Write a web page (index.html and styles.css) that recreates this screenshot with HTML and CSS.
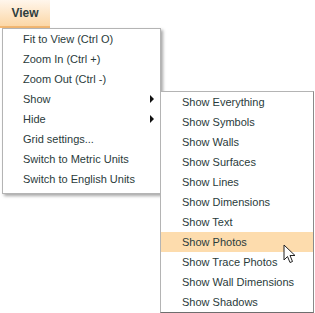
FILE: index.html
```html
<!DOCTYPE html>
<html lang="en">
<head>
  <meta charset="UTF-8">
  <title>View menu</title>
  <link rel="stylesheet" href="styles.css">
</head>
<body>
  <div class="menubar">
    <div class="menu-title">View</div>
  </div>

  <div class="dropdown">
    <ul class="menu">
      <li>Fit to View (Ctrl O)</li>
      <li>Zoom In (Ctrl +)</li>
      <li>Zoom Out (Ctrl -)</li>
      <li class="has-sub">Show <span class="arrow"></span></li>
      <li class="has-sub">Hide <span class="arrow"></span></li>
      <li>Grid settings...</li>
      <li>Switch to Metric Units</li>
      <li>Switch to English Units</li>
    </ul>

    <ul class="submenu">
      <li>Show Everything</li>
      <li>Show Symbols</li>
      <li>Show Walls</li>
      <li>Show Surfaces</li>
      <li>Show Lines</li>
      <li>Show Dimensions</li>
      <li>Show Text</li>
      <li class="active">Show Photos</li>
      <li>Show Trace Photos</li>
      <li>Show Wall Dimensions</li>
      <li>Show Shadows</li>
    </ul>

    <!-- mouse pointer -->
    <svg class="cursor" width="14" height="21" viewBox="0 0 14 21">
      <path d="M1 1 L1 16 L4.5 12.5 L7 18.5 L9.5 17.5 L7 11.5 L12 11.5 Z" fill="#fff" stroke="#222" stroke-width="1" stroke-linejoin="round"/>
    </svg>
  </div>
</body>
</html>
```

FILE: styles.css
```css
body {
  margin: 0;
  background: #fff;
  font-family: "Liberation Sans", Arial, sans-serif;
  font-size: 11px;
  color: #2a3b3b;
  width: 315px;
  height: 313px;
  overflow: hidden;
}

.menubar {
  display: flex;
  height: 28px;
}

.menu-title {
  width: 50px;
  height: 26px;
  line-height: 27px;
  text-align: center;
  font-size: 12px;
  font-weight: bold;
  color: #2e3d3d;
  background: linear-gradient(#fff6ec, #fcd7a6);
  border-bottom: 2px solid #f2b772;
}

.dropdown {
  position: relative;
}

ul {
  list-style: none;
  margin: 0;
  padding: 0;
}

li {
  height: 20px;
  line-height: 20px;
  white-space: nowrap;
}

.menu {
  width: 157px;
  margin: 0 0 0 2px;
  padding-bottom: 4px;
  background: #fff;
  border: 1px solid #b4b4b4;
  box-shadow: 2px 2px 3px rgba(0, 0, 0, 0.35);
}

.menu li {
  padding-left: 20px;
  position: relative;
}

.arrow {
  position: absolute;
  right: 6px;
  top: 6px;
  width: 0;
  height: 0;
  border-top: 4px solid transparent;
  border-bottom: 4px solid transparent;
  border-left: 4px solid #111;
}

.submenu {
  position: absolute;
  left: 160px;
  top: 63px;
  width: 152px;
  background: #fff;
  border: 1px solid #b4b4b4;
  border-right-color: #8a8a8a;
  border-bottom-color: #6e6e6e;
}

.submenu li {
  padding-left: 21px;
}

.submenu .active {
  background: #fddcad;
}

.cursor {
  position: absolute;
  left: 283px;
  top: 216px;
}
```
